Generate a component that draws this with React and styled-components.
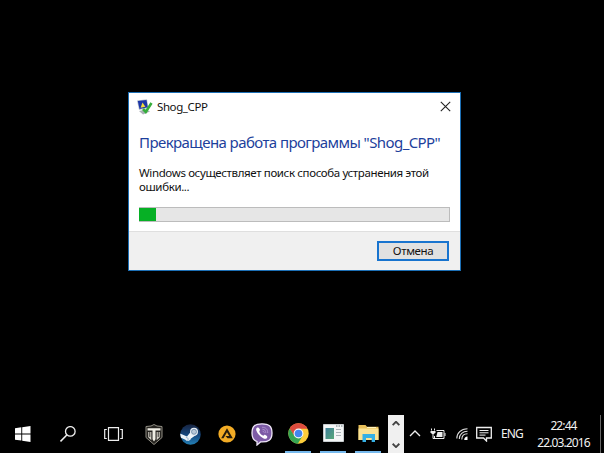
import React from 'react'
import styled, { createGlobalStyle } from 'styled-components'

const GlobalStyle = createGlobalStyle`
  * {
    box-sizing: border-box;
  }
  body {
    margin: 0;
    background: #000;
    font-family: 'Noto Sans', 'Open Sans', sans-serif;
  }
`

const Desktop = styled.div`
  display: flex;
  flex-direction: column;
  width: 604px;
  height: 453px;
  background: #000;
  overflow: hidden;
`

const Workspace = styled.main`
  flex: 1;
  padding: 92px 143px 0 128px;
`

const Dialog = styled.section`
  display: flex;
  flex-direction: column;
  height: 179px;
  border: 1px solid #1c6fb5;
  background: #fff;
`

const TitleBar = styled.header`
  display: flex;
  align-items: center;
  height: 27px;
  padding: 0 9px 0 8px;
`

const Title = styled.span`
  flex: 1;
  margin-left: 4px;
  font-size: 11.5px;
  letter-spacing: -0.4px;
  color: #111;
`

const Body = styled.div`
  flex: 1;
  padding: 12px 10px 0;
`

const Heading = styled.h1`
  margin: 0;
  font-size: 15px;
  font-weight: 400;
  line-height: 20px;
  letter-spacing: -0.58px;
  white-space: nowrap;
  color: #1d3f9c;
`

const Message = styled.p`
  margin: 14px 0 0;
  font-size: 11.5px;
  line-height: 14px;
  letter-spacing: -0.37px;
  white-space: nowrap;
  color: #111;
`

const Progress = styled.div`
  height: 15px;
  margin-top: 13px;
  border: 1px solid #bcbcbc;
  background: #e6e6e6;
`

const ProgressFill = styled.div`
  width: 17px;
  height: 13px;
  margin-left: -1px;
  background: #06b025;
`

const Footer = styled.footer`
  display: flex;
  justify-content: flex-end;
  height: 39px;
  padding: 9px 11px 0;
  border-top: 1px solid #dfdfdf;
  background: #f0f0f0;
`

const Button = styled.button`
  width: 72px;
  height: 20px;
  padding: 0;
  border: 2px solid #1874cf;
  background: #e1e1e1;
  font: 11.5px/14px 'Noto Sans', sans-serif;
  letter-spacing: -0.4px;
  color: #111;
`

const Taskbar = styled.nav`
  display: grid;
  grid-template-columns: 45px 46px 45px 36px 36px 37px 34px 38px 32px 38px 1px 16px 22px 23px 25px 19px 38px 67px 2px 1px;
  height: 38px;
  background: #000;
  color: #fff;
`

const Cell = styled.div`
  display: flex;
  align-items: center;
  justify-content: center;
  height: 38px;
`

const AppCell = styled(Cell)`
  justify-self: center;
  width: 26px;
  border-bottom: ${ ({ running }) => running ? '2px solid #76b9ed' : '0' };
`

const ScrollStrip = styled.div`
  display: flex;
  flex-direction: column;
  align-items: center;
  justify-content: space-between;
  padding: 6px 0 5px;
  background: #f0f0f0;
`

const Label = styled.span`
  margin-top: -1px;
  font-size: 12px;
  letter-spacing: -0.8px;
  color: #f2f2f2;
`

const Clock = styled.div`
  display: flex;
  flex-direction: column;
  align-items: center;
  justify-content: center;
  padding-right: 2px;
  font-size: 12px;
  line-height: 17px;
  letter-spacing: -0.9px;
  white-space: nowrap;
  color: #f2f2f2;
`

const ShowDesktop = styled.div`
  background: #666;
`

const ProgramIcon = () => (
  <svg width="16" height="16" viewBox="0 0 16 16">
    <path d="M0 1.500L10 .3l1.500 8.700L2 11z" fill="#b9c3cf" />
    <path d="M.8 2l8.700-1 1.300 7.300L2.500 10z" fill="#1d36a8" />
    <path d="M5.500 3.500l2.900 4.300-4.800.9z" fill="#f2dc3c" />
    <path d="M2 12l7-1.500 4 2-7 3z" fill="#a9afb5" />
    <path d="M6 10l2.800 3L14.500 4" fill="none" stroke="#35ad3b" strokeWidth="2.600" />
  </svg>
)

const CloseIcon = () => (
  <svg width="11" height="11" viewBox="0 0 11 11">
    <path d="M.8.8l9.400 9.400M10.200.8L.8 10.200" fill="none" stroke="#222" strokeWidth="1.100" />
  </svg>
)

const StartIcon = () => (
  <svg width="16" height="16" viewBox="0 0 16 16" fill="#fff">
    <path d="M0 2.200l6.300-.9v6.200H0zM7.200 1.200L15.500 0v7.500H7.200zM0 8.400h6.300v6.200L0 13.700zM7.200 8.400h8.300V16l-8.300-1.200z" />
  </svg>
)

const SearchIcon = () => (
  <svg width="16" height="16" viewBox="0 0 16 16" fill="none" stroke="#eee">
    <circle cx="10.300" cy="5.400" r="4.800" strokeWidth="1.300" />
    <path d="M6.800 9L.5 15.400" strokeWidth="1.600" />
  </svg>
)

const TaskViewIcon = () => (
  <svg width="19" height="14" viewBox="0 0 19 14" fill="none" stroke="#eee" strokeWidth="1.200">
    <path d="M4.500.7h10v12.600h-10zM2.800 2.500H.7v9h2.100M16.200 2.500h2.100v9h-2.100" />
  </svg>
)

const TanksIcon = () => (
  <svg width="18" height="21" viewBox="0 0 18 21">
    <path d="M1 2.500L6 2l3-1.500L12 2l5 .5v11L9 20.500l-8-7z" fill="#25231f" stroke="#918e84" />
    <path d="M2.500 4.200h13v2.300h-5v8.700L9 17.500l-1.500-2.300V6.500h-5z" fill="#f0eee5" />
    <path d="M3.800 8v5l2 2V8M14.200 8v5l-2 2V8" fill="none" stroke="#d5d2c9" strokeWidth="1.100" />
  </svg>
)

const SteamIcon = () => (
  <svg width="21" height="21" viewBox="0 0 21 21">
    <defs>
      <linearGradient id="steam" x1="0" y1="0" x2="0" y2="1">
        <stop offset="0" stopColor="#17233f" />
        <stop offset=".55" stopColor="#174a82" />
        <stop offset="1" stopColor="#2380b5" />
      </linearGradient>
      <clipPath id="steamDisc"><circle cx="10.500" cy="10.500" r="10.200" /></clipPath>
    </defs>
    <circle cx="10.500" cy="10.500" r="10.200" fill="url(#steam)" />
    <g clipPath="url(#steamDisc)">
      <path d="M0 9.500l7 3 4-5 5 3.500-5 3.400a3.200 3.200 0 0 1-5.600 1.300L0 13.300z" fill="#eef3f8" />
      <circle cx="14" cy="7.800" r="4" fill="#e7edf3" />
      <circle cx="14" cy="7.800" r="2.500" fill="#b9c8d8" stroke="#6987a5" strokeWidth=".8" />
      <path d="M5.800 13.300l2 .8a1.500 1.500 0 0 1-1 2.500" fill="none" stroke="#87a7c4" strokeWidth=".8" />
    </g>
  </svg>
)

const AimpIcon = () => (
  <svg width="18" height="18" viewBox="0 0 18 18">
    <circle cx="9" cy="9" r="8.600" fill="#f3ac25" />
    <path d="M9 3.200l5.800 10H9.500L7.500 11h3.700L9 7.200l-3.500 6H3.200z" fill="#271d0d" />
  </svg>
)

const ViberIcon = () => (
  <svg width="22" height="23" viewBox="0 0 22 23">
    <path d="M11 .8C4.300.8 1 3 1 10c0 4.800 1.500 7.400 5 8.500V22l3.500-3.100C17.400 19.300 21 17 21 10 21 3 17.700.8 11 .8z" fill="#7d5ba6" stroke="#eee6f7" strokeWidth="1.300" />
    <path d="M6 4.800c1-.8 1.700-.3 2.800 1.500.8 1.200-.8 1.600-.5 2.500.6 1.800 1.900 3.200 3.700 3.800.9.3 1.200-1.200 2.400-.6 2 1.200 2.400 1.900 1.500 2.900-1 1.300-2.200 1.100-4.100 0C8.700 13.200 6.700 10.700 5.400 7.700c-.5-1.200-.3-2.200.6-2.900z" fill="#fff" />
    <path d="M11.500 4.300c3.500.1 5.200 2 5.200 5.300M11.800 6.300c2 .2 3 1.300 3 3.200M12 8.200c.8.1 1.100.5 1.200 1.200" fill="none" stroke="#b79dd6" strokeWidth=".8" strokeLinecap="round" />
  </svg>
)

const ChromeIcon = () => (
  <svg width="21" height="21" viewBox="0 0 21 21">
    <circle cx="10.500" cy="10.500" r="10.200" fill="#fccd3b" />
    <path d="M1.700 5.400A10.200 10.200 0 0 1 19.500 5.700H10.500L6 13z" fill="#dd4b3e" />
    <path d="M1.700 5.400L6.400 13 14.500 13 9.800 20.700A10.200 10.200 0 0 1 1.700 5.400z" fill="#35a554" />
    <circle cx="10.500" cy="10.500" r="4.900" fill="#f5f7f8" />
    <circle cx="10.500" cy="10.500" r="3.800" fill="#4386ef" />
  </svg>
)

const WindowIcon = () => (
  <svg width="21" height="18" viewBox="0 0 21 18">
    <defs>
      <linearGradient id="pane" x1="0" y1="0" x2="1" y2="1">
        <stop offset="0" stopColor="#3e7f9b" />
        <stop offset="1" stopColor="#58a879" />
      </linearGradient>
    </defs>
    <path d="M.5.5h20v17H.5z" fill="#f4f6f6" stroke="#c8cdd0" />
    <path d="M2.500 4h8.500v11H2.500z" fill="url(#pane)" />
    <path d="M13 5.500h5M13 8.500h5M13 11.500h5" stroke="#abb3b8" />
    <path d="M13 2h1.500M15.500 2H17M18 2h1.500" stroke="#68747c" />
  </svg>
)

const FolderIcon = () => (
  <svg width="21" height="19" viewBox="0 0 21 19">
    <path d="M.5 1h7l1.500 1.800h11.500V16H.5z" fill="#e8bf59" />
    <path d="M.5 4.500h20V16H.5z" fill="#fbe294" />
    <path d="M9 3.500h9" stroke="#fff3bf" />
    <path d="M4.500 10h12.500v8h-3.300v-4H8v4H4.500z" fill="#35b0e5" />
  </svg>
)

const Chevron = ({ down, color = '#eee', width = 12, stroke = 1.4 }) => (
  <svg width={ width } height={ width * 0.6 } viewBox="0 0 12 7">
    <path d={ down ? 'M1 1l5 5 5-5' : 'M1 6l5-5 5 5' } fill="none" stroke={ color } strokeWidth={ stroke } />
  </svg>
)

const BatteryIcon = () => (
  <svg width="16" height="13" viewBox="0 0 16 13" fill="none" stroke="#eee">
    <path d="M6.500 2.500h7.500v8H4.500V8" />
    <path d="M7.500 4h5v5H6.200z" fill="#eee" stroke="none" />
    <path d="M15 5v3" />
    <path d="M1.500.5v2M4.500.5v2M3 6v4.500h2" />
    <path d="M.5 3h5v1.500L4 6H2L.5 4.500z" fill="#eee" stroke="none" />
  </svg>
)

const WifiIcon = () => (
  <svg width="12" height="12" viewBox="0 0 12 12" fill="none" stroke="#ddd">
    <path d="M.8 10.500C.8 5 5 .8 11.500.8M3.300 11C3.300 6.500 6.800 3.300 11.500 3.300M5.800 11.500c0-3.300 2.200-5.700 5.700-5.700" strokeWidth="1.100" />
    <path d="M8.200 12c0-2 1.300-3.500 3.300-3.500V12z" fill="#fff" stroke="none" />
  </svg>
)

const NoticeIcon = () => (
  <svg width="16" height="16" viewBox="0 0 16 16" fill="none" stroke="#eee" strokeWidth="1.300">
    <path d="M.7 1.500h14.600v10.500h-4.800v3l-3-3H.7z" />
    <path d="M3.500 4.500h9M3.500 6.800h9M3.500 9.100h6" strokeWidth="1" />
  </svg>
)

const ErrorDialog = () => (
  <Dialog>
    <TitleBar>
      <ProgramIcon />
      <Title>Shog_CPP</Title>
      <CloseIcon />
    </TitleBar>
    <Body>
      <Heading>Прекращена работа программы "Shog_CPP"</Heading>
      <Message>
        Windows осуществляет поиск способа устранения этой<br />
        ошибки...
      </Message>
      <Progress><ProgressFill /></Progress>
    </Body>
    <Footer>
      <Button>Отмена</Button>
    </Footer>
  </Dialog>
)

const App = () => (
  <>
    <GlobalStyle />
    <Desktop>
      <Workspace>
        <ErrorDialog />
      </Workspace>
      <Taskbar>
        <Cell><StartIcon /></Cell>
        <Cell><SearchIcon /></Cell>
        <Cell><TaskViewIcon /></Cell>
        <AppCell><TanksIcon /></AppCell>
        <AppCell><SteamIcon /></AppCell>
        <AppCell><AimpIcon /></AppCell>
        <AppCell><ViberIcon /></AppCell>
        <AppCell running><ChromeIcon /></AppCell>
        <AppCell running><WindowIcon /></AppCell>
        <AppCell running><FolderIcon /></AppCell>
        <span />
        <ScrollStrip>
          <Chevron color="#444" width={ 8 } stroke={ 2.8 } />
          <Chevron down color="#444" width={ 8 } stroke={ 2.8 } />
        </ScrollStrip>
        <Cell><Chevron /></Cell>
        <Cell><BatteryIcon /></Cell>
        <Cell><WifiIcon /></Cell>
        <Cell><NoticeIcon /></Cell>
        <Cell><Label>ENG</Label></Cell>
        <Clock>
          <span>22:44</span>
          <span>22.03.2016</span>
        </Clock>
        <span />
        <ShowDesktop />
      </Taskbar>
    </Desktop>
  </>
)

export default App
